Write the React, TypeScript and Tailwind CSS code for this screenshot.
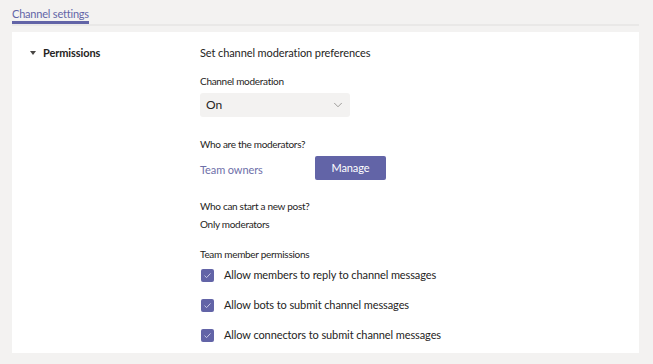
import { ChevronDown } from "lucide-react";

const permissions = [
  "Allow members to reply to channel messages",
  "Allow bots to submit channel messages",
  "Allow connectors to submit channel messages",
];

function CheckedBox() {
  return (
    <span className="flex h-[13px] w-[13px] shrink-0 items-center justify-center rounded-[2px] bg-[#6264a7]">
      <svg width="9" height="9" viewBox="0 0 9 9" fill="none">
        <path d="M1.5 4.6 L3.6 6.6 L7.5 2.4" stroke="#c8c9e6" strokeWidth="1" />
      </svg>
    </span>
  );
}

export default function App() {
  return (
    <div className="h-[364px] w-[653px] overflow-hidden bg-[#f3f2f1] font-['Lato',sans-serif] text-[11px] tracking-[-0.1px] text-[#252423]">
      <div className="ml-[12px] mr-[14px] pt-[6px]">
        <div className="inline-block border-b-[3px] border-[#6264a7] text-[11px] leading-[15px] tracking-[-0.2px] text-[#6264a7]">
          Channel settings
        </div>
        <div className="h-[2px] bg-[#e9e8e7]" />
      </div>

      <div className="mx-[12px] mt-[6px] mr-[14px] h-[321px] bg-white">
        <div className="flex pt-[13px]">
          <div className="flex w-[188px] shrink-0 items-start pl-[18px]">
            <span className="mt-[6px] mr-[7px] h-0 w-0 border-x-[3px] border-t-[4px] border-x-transparent border-t-[#484644]" />
            <span className="text-[11px] font-bold leading-[16px]">Permissions</span>
          </div>

          <div className="flex flex-col">
            <div className="leading-[16px]">Set channel moderation preferences</div>

            <div className="mt-[13px] text-[10px] leading-[14px] tracking-[-0.3px]">Channel moderation</div>
            <div className="mt-[5px] flex h-[24px] w-[150px] items-center justify-between rounded-[3px] bg-[#f3f2f1] pl-[6px] pr-[5px]">
              <span className="text-[12px]">On</span>
              <ChevronDown size={14} strokeWidth={1} className="text-[#605e5c]" />
            </div>

            <div className="mt-[20px] text-[10px] leading-[14px] tracking-[-0.3px]">Who are the moderators?</div>
            <div className="mt-[5px] flex items-start">
              <span className="mt-[6px] w-[115px] leading-[16px] text-[#6e6fa9]">Team owners</span>
              <button className="h-[24px] w-[71px] rounded-[2px] bg-[#6264a7] text-[11px] text-white">Manage</button>
            </div>

            <div className="mt-[19px] text-[10px] leading-[14px] tracking-[-0.3px]">Who can start a new post?</div>
            <div className="mt-[4px] text-[10px] leading-[14px] tracking-[-0.3px]">Only moderators</div>

            <div className="mt-[16px] text-[10px] leading-[14px] tracking-[-0.3px]">Team member permissions</div>
            <div className="mt-[6px] flex flex-col gap-[14px] pl-[1px]">
              {permissions.map((label) => (
                <label key={label} className="flex h-[16px] items-center gap-[10px]">
                  <CheckedBox />
                  <span>{label}</span>
                </label>
              ))}
            </div>
          </div>
        </div>
      </div>
    </div>
  );
}
